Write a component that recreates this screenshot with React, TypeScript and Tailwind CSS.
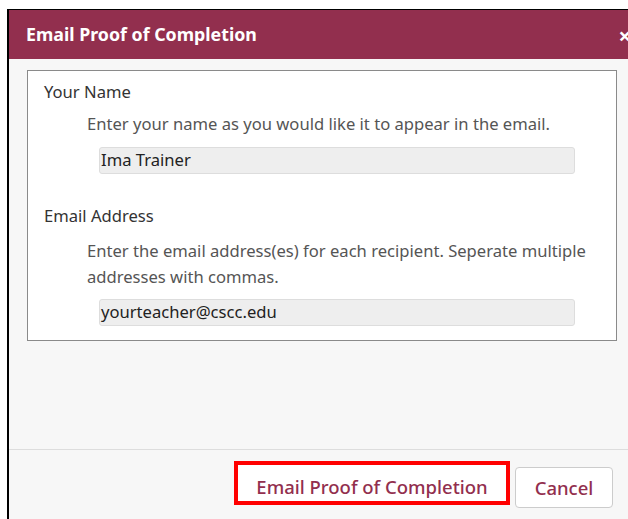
import React from "react";

const font = { fontFamily: '"Noto Sans", "Open Sans", sans-serif' };

export default function App() {
  return (
    <div className="w-[628px] h-[519px] bg-white overflow-hidden pt-[9px] pl-[7px]" style={font}>
      <div className="w-[680px] h-[510px] border-l-2 border-t border-black flex flex-col bg-[#f7f7f7]">
        {/* title bar */}
        <div className="h-[49px] bg-[#922f4e] flex items-center justify-between pl-[17px] pr-[56px] shrink-0">
          <span className="text-white font-bold text-[17.8px]">Email Proof of Completion</span>
          <span className="text-white font-bold text-[22px] leading-none">×</span>
        </div>
        {/* form body */}
        <div className="h-[391px] pt-[11px] pl-[18px] border-b border-[#dddddd] shrink-0">
          <div className="w-[590px] h-[271px] bg-white border border-[#8a8a8a] pl-[16px] text-[16.6px]">
            <div className="h-[42px] pt-[8px] text-[#333333] leading-[26px]">Your Name</div>
            <div className="pl-[43px] text-[#555555] leading-[26px] mt-[-2px]">
              Enter your name as you would like it to appear in the email.
            </div>
            <div className="ml-[55px] mt-[10px] w-[476px] h-[27px] bg-[#eeeeee] border border-[#dddddd] rounded-[3px] flex items-center pl-[1px] text-[#222222]">
              Ima Trainer
            </div>
            <div className="mt-[29px] text-[#333333] leading-[26px]">Email Address</div>
            <div className="pl-[43px] pr-[14px] mt-[9px] text-[#555555] leading-[26px]">
              Enter the email address(es) for each recipient. Seperate multiple addresses with commas.
            </div>
            <div className="ml-[55px] mt-[9px] w-[476px] h-[27px] bg-[#eeeeee] border border-[#dddddd] rounded-[3px] flex items-center pl-[1px] text-[#222222]">
              yourteacher@cscc.edu
            </div>
          </div>
        </div>
        {/* footer buttons */}
        <div className="flex items-start pl-[225px] pt-[11px] gap-[5px]">
          <button className="h-[44px] w-[276px] border-[4px] border-[#ff0000] bg-white text-[#922f4e] text-[18.5px] font-medium flex items-center justify-center pt-[8px]">
            Email Proof of Completion
          </button>
          <button className="mt-[6px] h-[41px] w-[98px] border border-[#cccccc] rounded-[4px] bg-white text-[#922f4e] text-[18.5px] font-medium flex items-center justify-center">
            Cancel
          </button>
        </div>
      </div>
    </div>
  );
}
